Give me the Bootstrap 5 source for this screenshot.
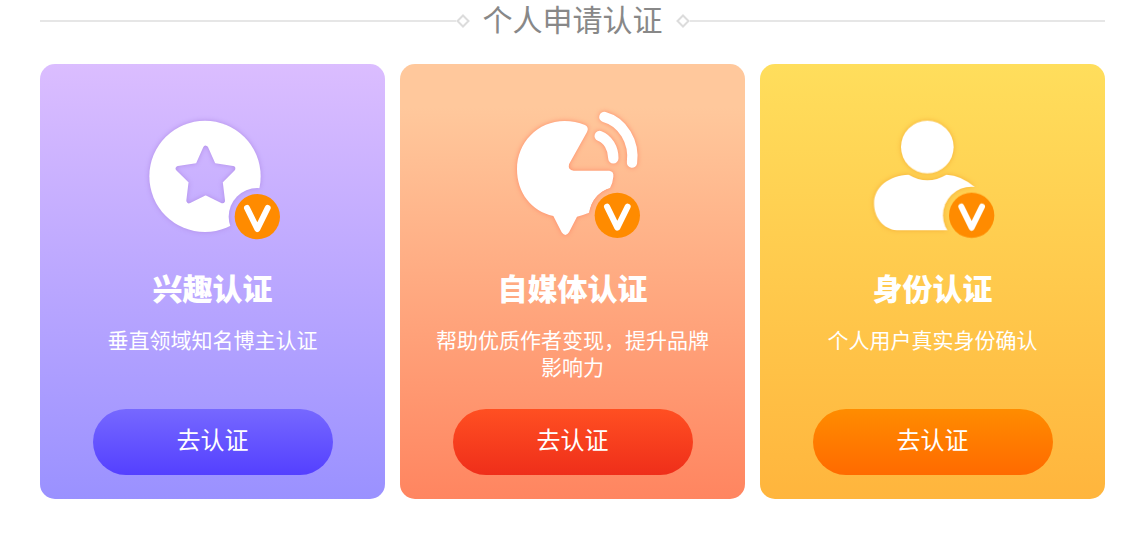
<!DOCTYPE html>
<html lang="zh-CN">
<head>
<meta charset="utf-8">
<meta name="viewport" content="width=device-width, initial-scale=1">
<title>个人申请认证</title>
<link href="https://cdn.jsdelivr.net/npm/bootstrap@5.3.0/dist/css/bootstrap.min.css" rel="stylesheet">
<style>
body { font-family: "Noto Sans CJK SC", sans-serif; background: #fff; }
.verify { padding: 0 24px 55px 40px; }
.verify-head { height: 42px; margin-bottom: 22px; }
.verify-head h1 { font-family: "Liberation Sans", "Noto Sans CJK SC", sans-serif; font-size: 30px; line-height: 42px; color: #888; margin: 0 13px; font-weight: 400; }
.rule { height: 2px; background: #e6e6e6; }
.diamond { width: 14px; height: 14px; flex: none; fill: none; stroke: #dcdcdc; stroke-width: 2; }
.verify-row { --bs-gutter-x: 15px; --bs-gutter-y: 15px; }
.verify-card { border: 0; border-radius: 15px; padding: 36px 30px 24px; color: #fff; }
.interest { background: linear-gradient(#dbbdff, #9a91ff); --glow: #b18ee8; }
.media { background: linear-gradient(#ffc89c 10%, #ff8560); --glow: #ff8a68; }
.identity { background: linear-gradient(#ffde5c, #ffb53d); --glow: #f5ae35; }
.verify-icon { filter: drop-shadow(0 0 8px var(--glow)); }
.verify-card h2 { font-size: 30px; line-height: 36px; font-weight: 900; margin: 19px 0 21px; }
.verify-card p { font-size: 21px; line-height: 27px; min-height: 54px; margin-bottom: 29px; }
.go { width: 240px; max-width: 100%; height: 66px; font-size: 24px; line-height: 36px; padding: 0 0 6px; border: 0; }
.go, .go:hover, .go:active { color: #fff !important; }
.interest .go { background: linear-gradient(#7668ff, #5440ff); }
.media .go { background: linear-gradient(#ff4f22, #ef2e1a); }
.identity .go { background: linear-gradient(#ff8c00, #ff6a00); }
</style>
</head>
<body>
<main class="verify">
  <header class="verify-head d-flex align-items-center">
    <span class="rule flex-fill"></span>
    <svg class="diamond" viewBox="0 0 14 14" aria-hidden="true"><path d="M7 1.5 12.5 7 7 12.5 1.5 7z"/></svg>
    <h1>个人申请认证</h1>
    <svg class="diamond" viewBox="0 0 14 14" aria-hidden="true"><path d="M7 1.5 12.5 7 7 12.5 1.5 7z"/></svg>
    <span class="rule flex-fill"></span>
  </header>
  <div class="row verify-row">
    <section class="col-md-4">
      <div class="card verify-card interest h-100 align-items-center text-center">
        <svg width="165" height="150" viewBox="0 0 495 450" aria-hidden="true">
          <mask id="cut-star">
            <rect width="495" height="450" fill="#fff"/>
            <path d="M227 145 250 197 308 206 270 244 277 302 227 277 177 302 184 244 145 206 204 197z" fill="#000" stroke="#000" stroke-width="16" stroke-linejoin="round"/>
            <circle cx="382" cy="350" r="86" fill="#000"/>
          </mask>
          <g class="verify-icon"><circle cx="225" cy="229" r="167" fill="#fff" mask="url(#cut-star)"/></g>
          <circle cx="382" cy="350" r="68" fill="#ff8b00"/>
          <path d="M351 324 382 387 413 324" fill="none" stroke="#fff" stroke-width="18" stroke-linecap="round" stroke-linejoin="round"/>
        </svg>
        <h2>兴趣认证</h2>
        <p>垂直领域知名博主认证</p>
        <button type="button" class="btn rounded-pill go">去认证</button>
      </div>
    </section>
    <section class="col-md-4">
      <div class="card verify-card media h-100 align-items-center text-center">
        <svg width="165" height="150" viewBox="-30 0 495 450" aria-hidden="true">
          <mask id="cut-media">
            <rect x="-30" width="495" height="450" fill="#fff"/>
            <circle cx="352" cy="346" r="84" fill="#000"/>
          </mask>
          <g class="verify-icon">
            <path mask="url(#cut-media)" fill="#fff" d="M255 75Q268 82 261 96L207 193Q203 210 221 212H328Q342 214 340 230Q338 251 330 264Q280 280 267 338Q250 345 231 350L207 397Q196 413 185 397L160 348C94 334 51 278 51 208C51 128 113 63 194 63Q226 63 255 75z"/>
            <path d="M299 108A59 70 0 0 1 340 175M313 51A110 123 0 0 1 396 188" fill="none" stroke="#fff" stroke-width="31" stroke-linecap="round"/>
          </g>
          <circle cx="352" cy="346" r="68" fill="#ff8b00"/>
          <path d="M321 320 352 383 383 320" fill="none" stroke="#fff" stroke-width="18" stroke-linecap="round" stroke-linejoin="round"/>
        </svg>
        <h2>自媒体认证</h2>
        <p>帮助优质作者变现，提升品牌影响力</p>
        <button type="button" class="btn rounded-pill go">去认证</button>
      </div>
    </section>
    <section class="col-md-4">
      <div class="card verify-card identity h-100 align-items-center text-center">
        <svg width="165" height="150" viewBox="-30 0 495 450" aria-hidden="true">
          <mask id="cut-identity">
            <rect x="-30" width="495" height="450" fill="#fff"/>
            <circle cx="335" cy="346" r="86" fill="#000"/>
          </mask>
          <g class="verify-icon" fill="#fff">
            <circle cx="202" cy="141" r="79"/>
            <path mask="url(#cut-identity)" d="M146 224Q202 257 259 224Q305 226 345 262L345 391H110C70 388 42 353 42 310C42 262 86 226 146 224z"/>
          </g>
          <circle cx="335" cy="346" r="68" fill="#ff8b00"/>
          <path d="M304 320 335 383 366 320" fill="none" stroke="#fff" stroke-width="18" stroke-linecap="round" stroke-linejoin="round"/>
        </svg>
        <h2>身份认证</h2>
        <p>个人用户真实身份确认</p>
        <button type="button" class="btn rounded-pill go">去认证</button>
      </div>
    </section>
  </div>
</main>
<script src="https://cdn.jsdelivr.net/npm/bootstrap@5.3.0/dist/js/bootstrap.bundle.min.js"></script>
</body>
</html>
